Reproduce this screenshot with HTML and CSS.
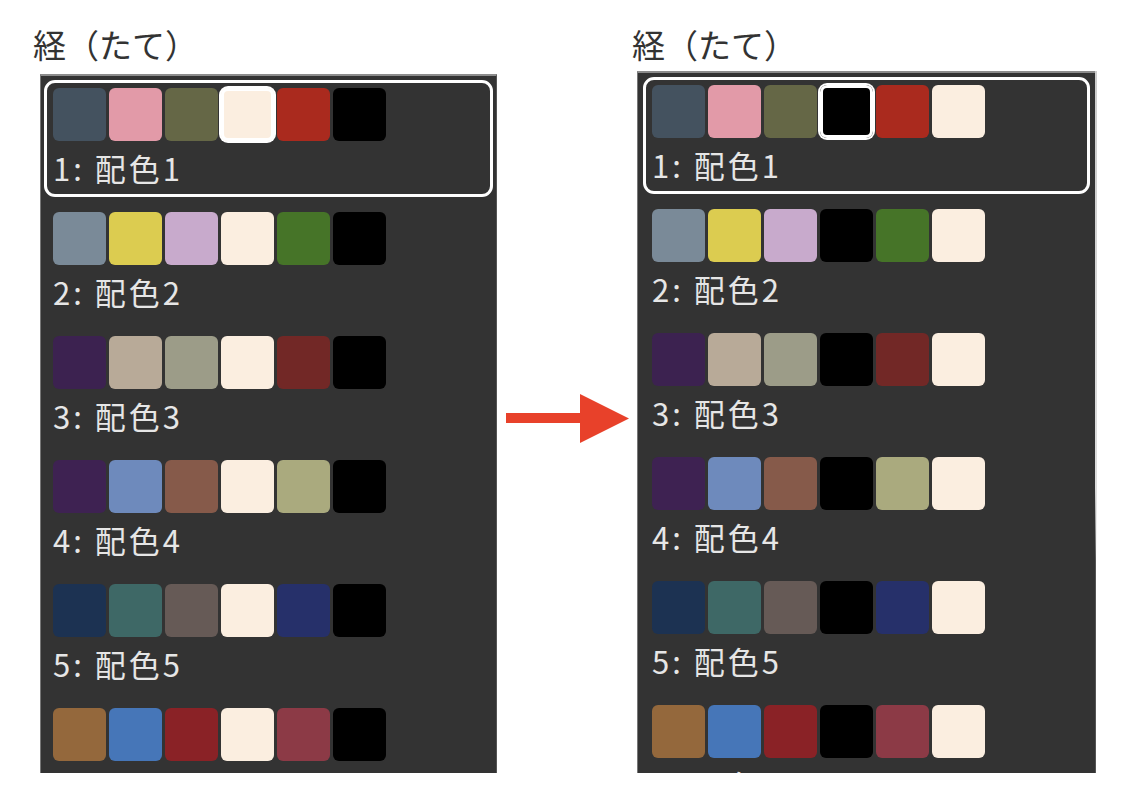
FILE: index.html
```html
<!DOCTYPE html>
<html lang="ja">
<head>
    <meta charset="UTF-8">
    <title>経（たて）配色</title>
    <link rel="stylesheet" href="styles.css">
</head>
<body>
    <div class="compare">
        <!-- 変更前 -->
        <section class="column">
            <h2 class="title">経（たて）</h2>
            <div class="panel">
                <div class="item selected">
                    <div class="swatches">
                        <span class="swatch" style="background:#44525f"></span>
                        <span class="swatch" style="background:#e29aa8"></span>
                        <span class="swatch" style="background:#656746"></span>
                        <span class="swatch active" style="background:#fbeee0"></span>
                        <span class="swatch" style="background:#aa2a1e"></span>
                        <span class="swatch" style="background:#000"></span>
                    </div>
                    <div class="label">1: 配色1</div>
                </div>
                <div class="item">
                    <div class="swatches">
                        <span class="swatch" style="background:#7a8a98"></span>
                        <span class="swatch" style="background:#dccc50"></span>
                        <span class="swatch" style="background:#c8aacc"></span>
                        <span class="swatch" style="background:#fbeee0"></span>
                        <span class="swatch" style="background:#467428"></span>
                        <span class="swatch" style="background:#000"></span>
                    </div>
                    <div class="label">2: 配色2</div>
                </div>
                <div class="item">
                    <div class="swatches">
                        <span class="swatch" style="background:#3c2250"></span>
                        <span class="swatch" style="background:#b8aa98"></span>
                        <span class="swatch" style="background:#9c9c88"></span>
                        <span class="swatch" style="background:#fbeee0"></span>
                        <span class="swatch" style="background:#722826"></span>
                        <span class="swatch" style="background:#000"></span>
                    </div>
                    <div class="label">3: 配色3</div>
                </div>
                <div class="item">
                    <div class="swatches">
                        <span class="swatch" style="background:#3e2252"></span>
                        <span class="swatch" style="background:#6e8abc"></span>
                        <span class="swatch" style="background:#865a4a"></span>
                        <span class="swatch" style="background:#fbeee0"></span>
                        <span class="swatch" style="background:#aaaa7e"></span>
                        <span class="swatch" style="background:#000"></span>
                    </div>
                    <div class="label">4: 配色4</div>
                </div>
                <div class="item">
                    <div class="swatches">
                        <span class="swatch" style="background:#1c3252"></span>
                        <span class="swatch" style="background:#3e6866"></span>
                        <span class="swatch" style="background:#665a56"></span>
                        <span class="swatch" style="background:#fbeee0"></span>
                        <span class="swatch" style="background:#26306a"></span>
                        <span class="swatch" style="background:#000"></span>
                    </div>
                    <div class="label">5: 配色5</div>
                </div>
                <div class="item">
                    <div class="swatches">
                        <span class="swatch" style="background:#94683c"></span>
                        <span class="swatch" style="background:#4676b8"></span>
                        <span class="swatch" style="background:#8a2226"></span>
                        <span class="swatch" style="background:#fbeee0"></span>
                        <span class="swatch" style="background:#8c3a46"></span>
                        <span class="swatch" style="background:#000"></span>
                    </div>
                    <div class="label">6: 配色6</div>
                </div>
            </div>
        </section>

        <!-- 矢印 -->
        <div class="arrow">
            <svg width="123" height="50" viewBox="0 0 123 50">
                <rect x="0" y="19" width="76" height="10" fill="#e8412a"/>
                <polygon points="74,0 123,24.5 74,49" fill="#e8412a"/>
            </svg>
        </div>

        <!-- 変更後 -->
        <section class="column column-after">
            <h2 class="title">経（たて）</h2>
            <div class="panel">
                <div class="item selected">
                    <div class="swatches">
                        <span class="swatch" style="background:#44525f"></span>
                        <span class="swatch" style="background:#e29aa8"></span>
                        <span class="swatch" style="background:#656746"></span>
                        <span class="swatch active" style="background:#000"></span>
                        <span class="swatch" style="background:#aa2a1e"></span>
                        <span class="swatch" style="background:#fbeee0"></span>
                    </div>
                    <div class="label">1: 配色1</div>
                </div>
                <div class="item">
                    <div class="swatches">
                        <span class="swatch" style="background:#7a8a98"></span>
                        <span class="swatch" style="background:#dccc50"></span>
                        <span class="swatch" style="background:#c8aacc"></span>
                        <span class="swatch" style="background:#000"></span>
                        <span class="swatch" style="background:#467428"></span>
                        <span class="swatch" style="background:#fbeee0"></span>
                    </div>
                    <div class="label">2: 配色2</div>
                </div>
                <div class="item">
                    <div class="swatches">
                        <span class="swatch" style="background:#3c2250"></span>
                        <span class="swatch" style="background:#b8aa98"></span>
                        <span class="swatch" style="background:#9c9c88"></span>
                        <span class="swatch" style="background:#000"></span>
                        <span class="swatch" style="background:#722826"></span>
                        <span class="swatch" style="background:#fbeee0"></span>
                    </div>
                    <div class="label">3: 配色3</div>
                </div>
                <div class="item">
                    <div class="swatches">
                        <span class="swatch" style="background:#3e2252"></span>
                        <span class="swatch" style="background:#6e8abc"></span>
                        <span class="swatch" style="background:#865a4a"></span>
                        <span class="swatch" style="background:#000"></span>
                        <span class="swatch" style="background:#aaaa7e"></span>
                        <span class="swatch" style="background:#fbeee0"></span>
                    </div>
                    <div class="label">4: 配色4</div>
                </div>
                <div class="item">
                    <div class="swatches">
                        <span class="swatch" style="background:#1c3252"></span>
                        <span class="swatch" style="background:#3e6866"></span>
                        <span class="swatch" style="background:#665a56"></span>
                        <span class="swatch" style="background:#000"></span>
                        <span class="swatch" style="background:#26306a"></span>
                        <span class="swatch" style="background:#fbeee0"></span>
                    </div>
                    <div class="label">5: 配色5</div>
                </div>
                <div class="item">
                    <div class="swatches">
                        <span class="swatch" style="background:#94683c"></span>
                        <span class="swatch" style="background:#4676b8"></span>
                        <span class="swatch" style="background:#8a2226"></span>
                        <span class="swatch" style="background:#000"></span>
                        <span class="swatch" style="background:#8c3a46"></span>
                        <span class="swatch" style="background:#fbeee0"></span>
                    </div>
                    <div class="label">6: 配色6</div>
                </div>
            </div>
        </section>
        <div class="scroll-edge"></div>
    </div>
</body>
</html>
```

FILE: styles.css
```css
body {
    margin: 0;
    background: #fff;
    font-family: "Noto Sans CJK JP", "Noto Sans", sans-serif;
}
.compare {
    display: flex;
    align-items: flex-start;
    padding-left: 33px;
}
.column {
    width: 464px;
}
.title {
    margin: 24px 0 0;
    font-size: 33px;
    line-height: 40px;
    font-weight: normal;
    color: #333;
}
.panel {
    margin: 10px 0 0 7px;
    padding: 4px 3px;
    box-sizing: border-box;
    background: #333;
    border-top: 2px solid #8c8c8c;
    border-left: 1px solid #777;
    border-right: 1px solid #555;
    overflow: hidden;
    height: 699px;
}
.item {
    border: 3px solid transparent;
    border-radius: 11px;
    padding: 5px 6px 2px;
    margin-bottom: 7px;
}
.item.selected {
    border-color: #fff;
}
.swatches {
    display: flex;
    gap: 3px;
}
.swatch {
    width: 53px;
    height: 53px;
    border-radius: 6px;
}
.swatch.active {
    border-radius: 7px;
    box-shadow: 0 0 0 2px #fff, inset 0 0 0 3px #fff;
}
.label {
    padding-top: 3px;
    height: 48px;
    line-height: 48px;
    font-size: 31px;
    letter-spacing: 3px;
    color: #e6e6e6;
}
.arrow {
    width: 135px;
    padding: 394px 0 0 9px;
    box-sizing: border-box;
}
.arrow svg {
    display: block;
}
.column-after {
    width: 464px;
}
.column-after .panel {
    margin: 7px 0 0 5px;
    width: 459px;
    height: 702px;
    padding: 4px 5px;
}
.scroll-edge {
    width: 2px;
    height: 490px;
    margin: 71px 0 0 -1px;
    background: linear-gradient(#ccc, #ddd 85%, rgba(220, 220, 220, 0));
}
```
